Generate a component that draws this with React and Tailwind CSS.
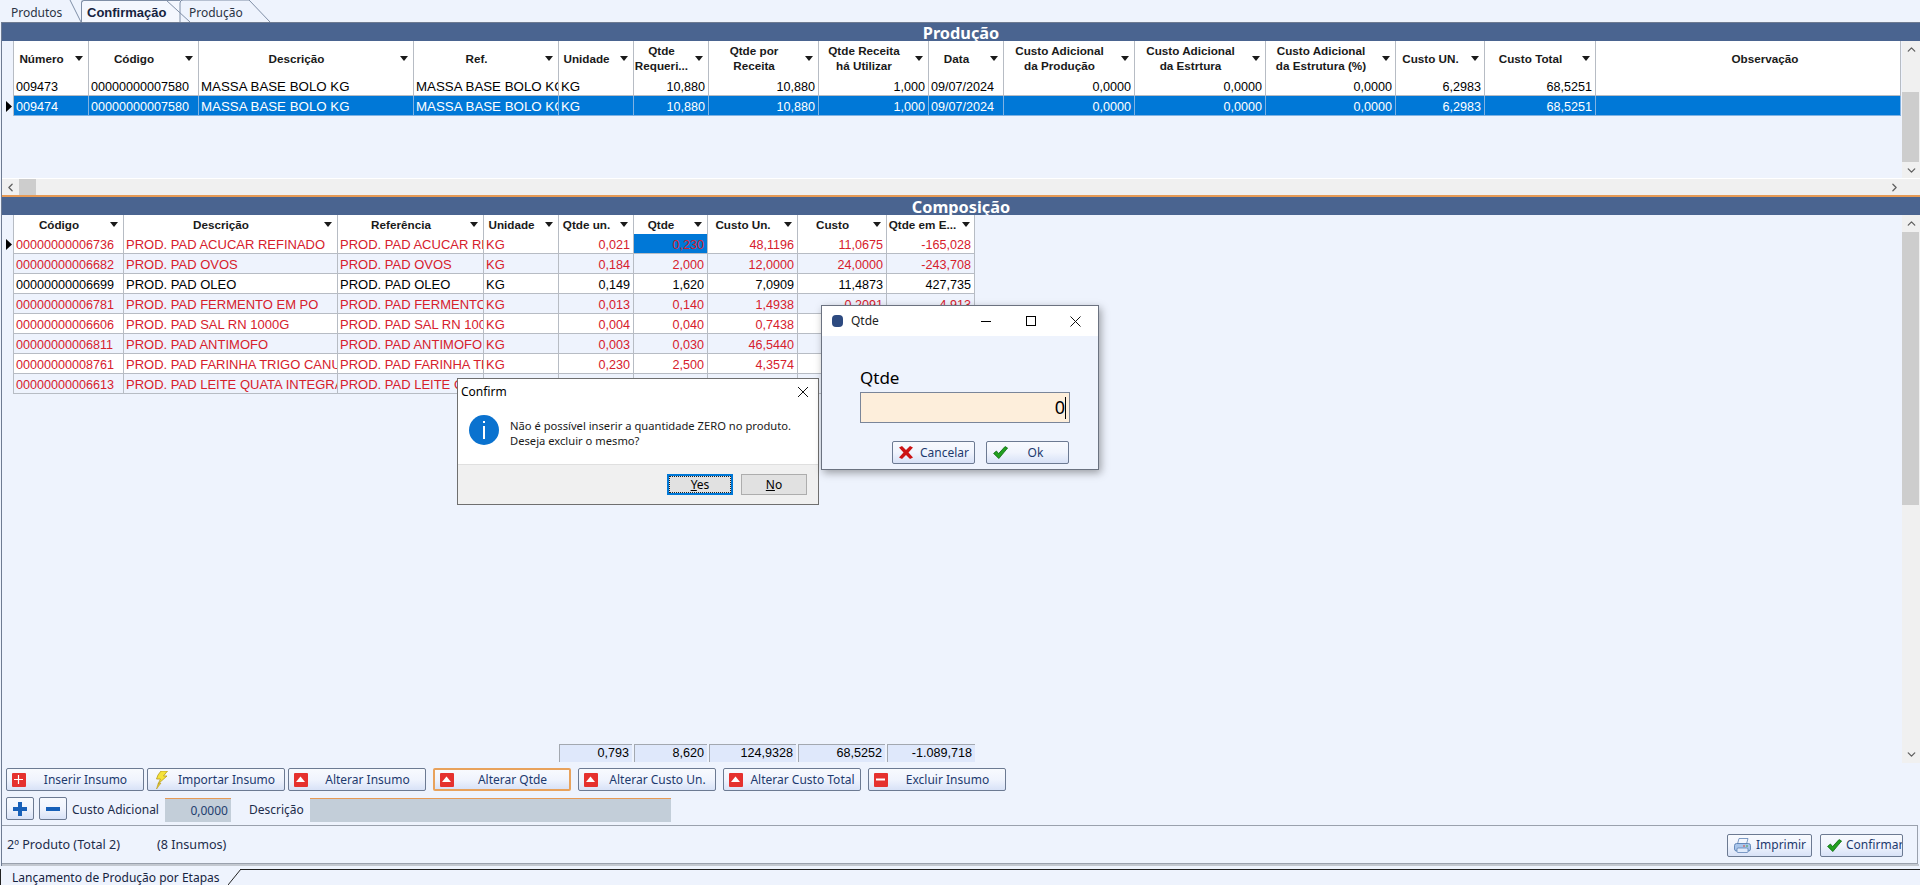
import clsx from "clsx";
import { ChevronDown, ChevronLeft, ChevronRight, ChevronUp } from "lucide-react";

const topCols = [
  { w: "w-[75px]", t: "Número" },
  { w: "w-[110px]", t: "Código" },
  { w: "w-[215px]", t: "Descrição", txt: "text-[13.3px]" },
  { w: "w-[145px]", t: "Ref.", txt: "text-[13.3px]" },
  { w: "w-[75px]", t: "Unidade", txt: "text-[13.3px]" },
  { w: "w-[75px]", t: "Qtde", t2: "Requeri...", right: true },
  { w: "w-[110px]", t: "Qtde por", t2: "Receita", right: true },
  { w: "w-[110px]", t: "Qtde Receita", t2: "há Utilizar", right: true },
  { w: "w-[75px]", t: "Data" },
  { w: "w-[131px]", t: "Custo Adicional", t2: "da Produção", right: true },
  { w: "w-[131px]", t: "Custo Adicional", t2: "da Estrtura", right: true },
  { w: "w-[130px]", t: "Custo Adicional", t2: "da Estrutura (%)", right: true },
  { w: "w-[89px]", t: "Custo UN.", right: true },
  { w: "w-[111px]", t: "Custo Total", right: true },
  { w: "w-[305px]", t: "Observação", noCaret: true },
];

const topRows = [
  ["009473", "00000000007580", "MASSA BASE BOLO KG", "MASSA BASE BOLO KG", "KG", "10,880", "10,880", "1,000", "09/07/2024", "0,0000", "0,0000", "0,0000", "6,2983", "68,5251", ""],
  ["009474", "00000000007580", "MASSA BASE BOLO KG", "MASSA BASE BOLO KG", "KG", "10,880", "10,880", "1,000", "09/07/2024", "0,0000", "0,0000", "0,0000", "6,2983", "68,5251", ""],
];

const compCols = [
  { w: "w-[110px]", t: "Código" },
  { w: "w-[214px]", t: "Descrição", txt: "text-[13px]" },
  { w: "w-[146px]", t: "Referência", txt: "text-[13px]" },
  { w: "w-[75px]", t: "Unidade", txt: "text-[13px]" },
  { w: "w-[75px]", t: "Qtde un.", right: true },
  { w: "w-[74px]", t: "Qtde", right: true },
  { w: "w-[90px]", t: "Custo Un.", right: true },
  { w: "w-[89px]", t: "Custo", right: true },
  { w: "w-[88px]", t: "Qtde em E...", right: true, tight: true },
];

const compRows = [
  ["00000000006736", "PROD. PAD ACUCAR REFINADO", "PROD. PAD ACUCAR REFINADO", "KG", "0,021", "0,230", "48,1196", "11,0675", "-165,028"],
  ["00000000006682", "PROD. PAD OVOS", "PROD. PAD OVOS", "KG", "0,184", "2,000", "12,0000", "24,0000", "-243,708"],
  ["00000000006699", "PROD. PAD OLEO", "PROD. PAD OLEO", "KG", "0,149", "1,620", "7,0909", "11,4873", "427,735"],
  ["00000000006781", "PROD. PAD FERMENTO EM PO", "PROD. PAD FERMENTO EM PO", "KG", "0,013", "0,140", "1,4938", "0,2091", "4,913"],
  ["00000000006606", "PROD. PAD SAL RN 1000G", "PROD. PAD SAL RN 1000G", "KG", "0,004", "0,040", "0,7438", "", ""],
  ["00000000006811", "PROD. PAD ANTIMOFO", "PROD. PAD ANTIMOFO", "KG", "0,003", "0,030", "46,5440", "", ""],
  ["00000000008761", "PROD. PAD FARINHA TRIGO CANUELAS", "PROD. PAD FARINHA TRIGO CANUELAS", "KG", "0,230", "2,500", "4,3574", "", ""],
  ["00000000006613", "PROD. PAD LEITE QUATA INTEGRAL", "PROD. PAD LEITE QUATA INTEGRAL", "KG", "0,189", "2,060", "4,5833", "", ""],
];

const totals = [
  { w: "w-[73px]", v: "0,793" },
  { w: "w-[73px]", v: "8,620" },
  { w: "w-[87px]", v: "124,9328" },
  { w: "w-[87px]", v: "68,5252" },
  { w: "w-[88px]", v: "-1.089,718" },
];

function Caret() {
  return (
    <svg width="8" height="5" viewBox="0 0 8 5" className="shrink-0">
      <polygon points="0,0 8,0 4,5" fill="#1a1a1a" />
    </svg>
  );
}

function Marker({ show }) {
  return (
    <div className="flex h-full w-[12px] shrink-0 items-center justify-end border-r border-[#b7bcc4] pr-[1px]">
      {show ? (
        <svg width="6" height="11" viewBox="0 0 6 11">
          <polygon points="0,0 6,5.5 0,11" fill="#000" />
        </svg>
      ) : null}
    </div>
  );
}

function HeaderCell({ col }) {
  return (
    <div className={clsx("flex h-full shrink-0 items-center border-r border-[#b7bcc4] bg-white", col.w)}>
      <div
        className={clsx(
          "flex-1 overflow-hidden whitespace-nowrap text-center leading-[15px]",
          col.noCaret && "pl-[34px]",
          col.t2 && "pb-[2px]"
        )}
      >
        {col.t}
        {col.t2 ? <br /> : null}
        {col.t2}
      </div>
      {col.noCaret ? null : (
        <div className={clsx("flex shrink-0 justify-center", col.tight ? "w-[16px]" : "w-[19px]")}>
          <Caret />
        </div>
      )}
    </div>
  );
}

function DataGrid({ cols, rows, headerClass, rowClass, hi }) {
  return (
    <div className="font-['Liberation_Sans',sans-serif] text-[12.6px] text-black">
      <div className={clsx("flex text-[11.7px] font-bold text-[#1a1a1a]", headerClass)}>
        <div className="h-full w-[12px] shrink-0 border-r border-[#b7bcc4]" />
        {cols.map((c) => (
          <HeaderCell key={c.t + (c.t2 || "")} col={c} />
        ))}
      </div>
      {rows.map((row, i) => {
        const st = rowClass(i);
        return (
          <div key={i} className="flex h-[20px]">
            <Marker show={i === hi.row} />
            {row.map((val, j) => (
              <div
                key={j}
                className={clsx(
                  "h-full shrink-0 overflow-hidden whitespace-nowrap border-r border-b border-[#b7bcc4] leading-[22px]",
                  cols[j].w,
                  cols[j].right ? "pr-[3px] text-right" : "pl-[2px]",
                  cols[j].txt,
                  st,
                  hi.cell === j && i === hi.row && "!bg-[#0078d7]"
                )}
              >
                {val}
              </div>
            ))}
          </div>
        );
      })}
    </div>
  );
}

function VScroll({ thumb }) {
  return (
    <div className="flex h-full w-[18px] shrink-0 flex-col items-center bg-[#f0f0f0]">
      <div className="flex h-[17px] shrink-0 items-center justify-center">
        <ChevronUp size={13} strokeWidth={2.4} className="text-[#606060]" />
      </div>
      <div className="w-full flex-1">
        <div className={clsx("w-[17px] bg-[#cdcdcd]", thumb)} />
      </div>
      <div className="flex h-[17px] shrink-0 items-center justify-center">
        <ChevronDown size={13} strokeWidth={2.4} className="text-[#606060]" />
      </div>
    </div>
  );
}

function Band({ children }) {
  return (
    <div className="h-[18px] shrink-0 overflow-hidden bg-[#4a6490] text-center text-[16.3px] font-bold leading-[21px] text-white">
      {children}
    </div>
  );
}

function RedIcon({ kind }) {
  return (
    <span className="flex h-[14px] w-[14px] shrink-0 items-center justify-center rounded-[1px] bg-[#e5312e]">
      <svg width="9" height="9" viewBox="0 0 9 9">
        {kind === "plus" ? <path d="M3.9 0h1.2v3.9H9v1.2H5.1V9H3.9V5.1H0V3.9h3.9z" fill="#fff" /> : null}
        {kind === "up" ? <polygon points="4.5,1.5 9,7 0,7" fill="#fff" /> : null}
        {kind === "minus" ? <rect x="0" y="3.5" width="9" height="2" fill="#fff" /> : null}
      </svg>
    </span>
  );
}

function BoltIcon() {
  return (
    <svg width="13" height="18" viewBox="0 0 13 18" className="ml-[3px] shrink-0">
      <polygon points="6,0 12.5,0 8.5,5 12,5 3,13 5.5,8 1.5,8 3,4" fill="#f5e33a" stroke="#b89a1c" strokeWidth="0.8" />
      <polygon points="3,13 1.5,18 6,12" fill="#e6c92c" stroke="#b89a1c" strokeWidth="0.6" />
    </svg>
  );
}

function CheckIcon() {
  return (
    <svg width="15" height="13" viewBox="0 0 15 13" className="shrink-0">
      <polygon points="0.6,7.4 3.4,5 5.6,7.6 12,0.6 14.6,2 5.8,12.6" fill="#22a01f" stroke="#0d6a12" strokeWidth="0.8" />
    </svg>
  );
}

function CrossIcon() {
  return (
    <svg width="14" height="13" viewBox="0 0 14 13" className="shrink-0">
      <polygon points="0,1.5 3,0 7,4 11,0 14,1.5 9.5,6.5 14,11.5 11,13 7,9 3,13 0,11.5 4.5,6.5" fill="#cc1414" />
    </svg>
  );
}

function PrinterIcon() {
  return (
    <svg width="17" height="15" viewBox="0 0 17 15" className="shrink-0">
      <polygon points="5,0.5 14,0.5 12.5,6 3.5,6" fill="#f4f7fd" stroke="#5f83b5" strokeWidth="0.8" />
      <rect x="0.5" y="5.5" width="16" height="7.5" rx="2" fill="#a9c5ea" stroke="#4f77ad" strokeWidth="0.8" />
      <rect x="3" y="10" width="11" height="4.5" rx="1" fill="#dfeafb" stroke="#4f77ad" strokeWidth="0.7" />
      <rect x="9" y="7.5" width="2" height="1" fill="#d94a3a" />
      <rect x="12" y="7.5" width="2" height="1" fill="#4aa34a" />
    </svg>
  );
}

function SkinButton({ className, children, active }) {
  return (
    <div
      className={clsx(
        "relative flex h-[23px] shrink-0 items-center overflow-hidden rounded-[2px] border bg-gradient-to-b from-[#f8fafe] via-[#f0f4fd] to-[#d8e2f7] text-xs text-[#1d3a6e]",
        active ? "border-[#e8a25c] border-2" : "border-[#6c7a92]",
        className
      )}
    >
      {children}
    </div>
  );
}

function ToolButton({ w, icon, label, active }) {
  return (
    <SkinButton className={w} active={active}>
      <span className="flex w-[22px] shrink-0 justify-center pl-[1px]">{icon}</span>
      <span className="flex-1 whitespace-nowrap pr-[1px] text-center">{label}</span>
    </SkinButton>
  );
}

export default function App() {
  return (
    <div className="relative flex h-[885px] w-[1920px] flex-col overflow-hidden bg-[#eef3fd] font-['Noto_Sans',sans-serif] text-[#16233f]">
      {/* abas do topo */}
      <div className="relative flex h-[22px] shrink-0 items-end text-xs">
        <div className="flex h-full w-[81px] items-center pl-[11px] pt-[4px] text-[#2b3444]">Produtos</div>
        <div className="flex h-full w-[99px] items-center rounded-tl-[3px] border-l border-t border-[#7f8ea6] bg-[#f4f7fe] pl-[5px] pt-[3px] font-['Liberation_Sans',sans-serif] text-[13px] font-bold text-[#16233f]">
          Confirmação
        </div>
        <div className="flex h-full w-[90px] items-center pl-[9px] pt-[4px] text-[#2b3444]">Produção</div>
        <svg width="280" height="22" viewBox="0 0 280 22" className="pointer-events-none absolute left-0 top-0">
          <path d="M70 0 L81 22" stroke="#7f8ea6" fill="none" />
          <path d="M166 0 L190 22" stroke="#7f8ea6" fill="none" />
          <path d="M180 22 L180 3 Q180 0 183 0 L249 0 L270 22" stroke="#7f8ea6" fill="none" />
        </svg>
      </div>

      {/* Produção */}
      <div className="ml-[1px] flex h-[175px] shrink-0 flex-col border-l border-t border-[#6e7b92]">
        <Band>Produção</Band>
        <div className="flex min-h-0 flex-1">
          <div className="min-w-0 flex-1">
            <DataGrid
              cols={topCols}
              rows={topRows}
              headerClass="h-[35px]"
              hi={{ row: 1, cell: -1 }}
              rowClass={(i) => (i === 1 ? "bg-[#0078d7] text-white !border-[#7fb2e3]" : "bg-white")}
            />
          </div>
          <VScroll thumb="mt-[34px] h-[70px]" />
        </div>
        <div className="flex h-[17px] shrink-0 items-center border-t border-white bg-[#f0f0f0] pr-[19px]">
          <div className="flex w-[17px] justify-center">
            <ChevronLeft size={13} strokeWidth={2.4} className="text-[#606060]" />
          </div>
          <div className="h-full w-[17px] bg-[#cdcdcd]" />
          <div className="flex-1" />
          <ChevronRight size={13} strokeWidth={2.4} className="text-[#606060]" />
        </div>
        <div className="h-[2px] shrink-0 bg-[#e69a55]" />
      </div>

      {/* Composição */}
      <div className="ml-[1px] flex min-h-0 flex-1 flex-col border-l border-[#6e7b92]">
        <Band>Composição</Band>
        <div className="flex h-[548px] shrink-0">
          <div className="flex min-w-0 flex-1 flex-col justify-between pb-[1px]">
            <DataGrid
              cols={compCols}
              rows={compRows}
              headerClass="h-[19px]"
              hi={{ row: 0, cell: 5 }}
              rowClass={(i) => clsx(i % 2 ? "bg-[#eef3fd]" : "bg-white", i !== 2 && "text-[#d6202c]")}
            />
            <div className="flex h-[18px] gap-[2px] pl-[557px] font-['Liberation_Sans',sans-serif] text-[12.6px] leading-[17px] text-black">
              {totals.map((c) => (
                <div key={c.v} className={clsx("border-l border-t border-[#a3a8b0] bg-[#dfe8fb] pr-[3px] text-right", c.w)}>
                  {c.v}
                </div>
              ))}
            </div>
          </div>
          <VScroll thumb="mt-[0px] h-[273px]" />
        </div>

        <div className="flex shrink-0 gap-[3px] pl-[4px] pt-[5px] [&>*:nth-child(3)]:mr-[4px] [&>*:nth-child(4)]:mr-[4px] [&>*:nth-child(5)]:mr-[4px] [&>*:nth-child(6)]:mr-[4px]">
          <ToolButton w="w-[138px]" icon={<RedIcon kind="plus" />} label="Inserir Insumo" />
          <ToolButton w="w-[138px]" icon={<BoltIcon />} label="Importar Insumo" />
          <ToolButton w="w-[138px]" icon={<RedIcon kind="up" />} label="Alterar Insumo" />
          <ToolButton w="w-[138px]" icon={<RedIcon kind="up" />} label="Alterar Qtde" active />
          <ToolButton w="w-[138px]" icon={<RedIcon kind="up" />} label="Alterar Custo Un." />
          <ToolButton w="w-[138px]" icon={<RedIcon kind="up" />} label="Alterar Custo Total" />
          <ToolButton w="w-[138px]" icon={<RedIcon kind="minus" />} label="Excluir Insumo" />
        </div>

        <div className="flex h-[34px] shrink-0 pl-[4px] pt-[6px] text-xs">
          <SkinButton className="w-[28px] justify-center">
            <svg width="14" height="14" viewBox="0 0 14 14">
              <path d="M5 0h4v5h5v4H9v5H5V9H0V5h5z" fill="#1760b8" />
            </svg>
          </SkinButton>
          <SkinButton className="ml-[5px] w-[28px] justify-center">
            <svg width="14" height="4" viewBox="0 0 14 4">
              <rect width="14" height="4" fill="#1760b8" />
            </svg>
          </SkinButton>
          <span className="ml-[5px] leading-[25px] text-[#1d2c4a]">Custo Adicional</span>
          <div className="ml-[6px] mt-[1px] h-[24px] w-[66px] border-t border-[#e69a55] bg-[#c3ced9] pr-[3px] text-right leading-[23px] text-[#24406f]">
            0,0000
          </div>
          <span className="ml-[18px] leading-[25px] text-[#1d2c4a]">Descrição</span>
          <div className="ml-[6px] mt-[1px] h-[24px] w-[361px] border-t border-[#e69a55] bg-[#c3ced9]" />
        </div>

        <div className="mr-[2px] flex h-[39px] shrink-0 items-center border-b border-r border-t border-[#9aa1ad] pl-[5px] pr-[14px] pt-[1px] text-[12.6px] text-[#1d2c4a]">
          <span>2º Produto (Total 2)</span>
          <span className="ml-[37px]">(8 Insumos)</span>
          <div className="flex-1" />
          <SkinButton className="w-[85px] gap-[5px] pl-[6px]">
            <PrinterIcon />
            <span>Imprimir</span>
          </SkinButton>
          <SkinButton className="ml-[8px] w-[83px] gap-[4px] pl-[6px]">
            <CheckIcon />
            <span>Confirmar</span>
          </SkinButton>
        </div>
        <div className="mr-[1px] h-[2px] shrink-0 bg-[#c3c8d0]" />
      </div>

      {/* barra inferior */}
      <div className="relative flex h-[19px] shrink-0 pt-[3px] text-xs">
        <div className="h-full w-[240px] border-l border-[#222] pl-[11px] leading-[18px] text-[#16233f]">
          Lançamento de Produção por Etapas
        </div>
        <div className="h-[1px] flex-1 bg-[#222]" />
        <svg width="14" height="16" viewBox="0 0 14 16" className="absolute left-[228px] top-[3px]">
          <path d="M13 0 L0 16" stroke="#222" fill="none" />
        </svg>
      </div>

      {/* dialogo Confirm */}
      <div className="absolute left-[457px] top-[378px] flex h-[127px] w-[362px] flex-col border border-[#6f6f6f] bg-white text-black">
        <div className="flex h-[25px] shrink-0 items-center justify-between pl-[3px] pr-[9px] text-xs">
          <span>Confirm</span>
          <svg width="12" height="12" viewBox="0 0 12 12">
            <path d="M1 1 L11 11 M11 1 L1 11" stroke="#111" fill="none" />
          </svg>
        </div>
        <div className="flex flex-1 items-start pl-[11px] pt-[11px]">
          <div className="relative flex h-[30px] w-[30px] shrink-0 items-center justify-center rounded-full bg-[#0a72cf]">
            <span className="absolute left-[14px] top-[6px] h-[2px] w-[2px] bg-white" />
            <span className="absolute left-[14px] top-[11px] h-[13px] w-[2px] bg-white" />
          </div>
          <div className="ml-[11px] pt-[3px] text-[11.2px] leading-[15px] text-[#1a1a1a]">
            Não é possível inserir a quantidade ZERO no produto.
            <br />
            Deseja excluir o mesmo?
          </div>
        </div>
        <div className="flex h-[40px] shrink-0 items-center justify-end gap-[8px] border-t border-[#dfdfdf] bg-[#f0f0f0] pr-[11px] text-xs">
          <div className="flex h-[21px] w-[66px] items-center justify-center border-2 border-[#0078d7] bg-[#e1e1e1] outline-1 -outline-offset-3 outline-dotted outline-[#222]">
            <span>
              <u>Y</u>es
            </span>
          </div>
          <div className="flex h-[21px] w-[66px] items-center justify-center border border-[#adadad] bg-[#e1e1e1]">
            <span>
              <u>N</u>o
            </span>
          </div>
        </div>
      </div>

      {/* dialogo Qtde */}
      <div className="absolute left-[821px] top-[305px] h-[165px] w-[278px] border border-[#6b7280] bg-[#eef3fd] shadow-[2px_3px_8px_rgba(0,0,0,0.35)]">
        <div className="flex h-[30px] items-center bg-white text-xs text-[#222]">
          <span className="ml-[10px] h-[12px] w-[11px] rounded-[4px] bg-[#2d4a80]" />
          <span className="ml-[8px] flex-1">Qtde</span>
          <div className="flex w-[45px] justify-center">
            <span className="h-[1px] w-[10px] bg-black" />
          </div>
          <div className="flex w-[45px] justify-center">
            <span className="h-[10px] w-[10px] border border-black" />
          </div>
          <div className="flex w-[45px] justify-center">
            <svg width="11" height="11" viewBox="0 0 11 11">
              <path d="M0.5 0.5 L10.5 10.5 M10.5 0.5 L0.5 10.5" stroke="#111" fill="none" />
            </svg>
          </div>
        </div>
        <div className="pl-[38px]">
          <div className="mt-[31px] h-[22px] text-[17px] leading-[22px] text-black">Qtde</div>
          <div className="mt-[3px] flex h-[31px] w-[210px] items-center justify-end border border-[#7a8599] bg-[#fdeedb] pr-[3px] text-[18px] text-black">
            0<span className="h-[22px] w-[1px] bg-black" />
          </div>
          <div className="mt-[18px] flex gap-[11px] pl-[32px]">
            <SkinButton className="w-[83px] gap-[7px] pl-[6px]">
              <CrossIcon />
              <span>Cancelar</span>
            </SkinButton>
            <SkinButton className="w-[83px] pl-[6px]">
              <CheckIcon />
              <span className="flex-1 pr-[5px] text-center">Ok</span>
            </SkinButton>
          </div>
        </div>
      </div>
    </div>
  );
}
